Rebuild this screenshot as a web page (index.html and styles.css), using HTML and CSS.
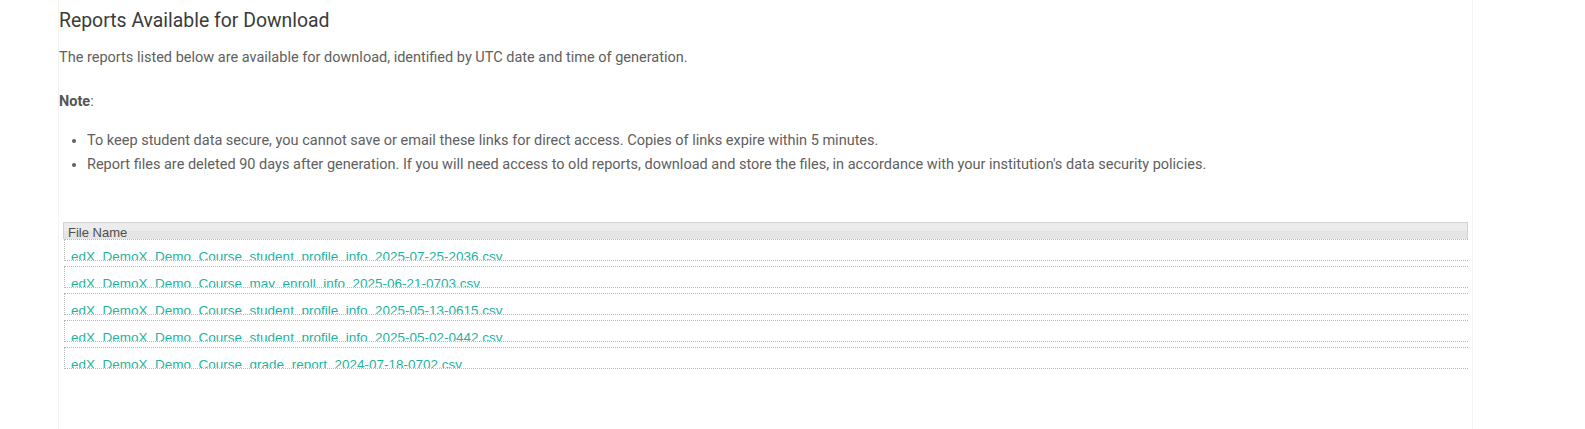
FILE: index.html
```html
<!DOCTYPE html>
<html>
<head>
<meta charset="utf-8">
<link rel="stylesheet" href="styles.css">
</head>
<body>
<div class="page">
  <h2 class="title">Reports Available for Download</h2>
  <p class="intro">The reports listed below are available for download, identified by UTC date and time of generation.</p>
  <p class="note"><strong>Note</strong>:</p>
  <ul class="notes">
    <li>To keep student data secure, you cannot save or email these links for direct access. Copies of links expire within 5 minutes.</li>
    <li>Report files are deleted 90 days after generation. If you will need access to old reports, download and store the files, in accordance with your institution's data security policies.</li>
  </ul>
  <div class="grid">
    <div class="grid-header"><span class="col-name">File Name</span></div>
    <div class="grid-body">
      <div class="grid-row"><div class="cell"><a href="#">edX_DemoX_Demo_Course_student_profile_info_2025-07-25-2036.csv</a></div></div>
      <div class="grid-row"><div class="cell"><a href="#">edX_DemoX_Demo_Course_may_enroll_info_2025-06-21-0703.csv</a></div></div>
      <div class="grid-row"><div class="cell"><a href="#">edX_DemoX_Demo_Course_student_profile_info_2025-05-13-0615.csv</a></div></div>
      <div class="grid-row"><div class="cell"><a href="#">edX_DemoX_Demo_Course_student_profile_info_2025-05-02-0442.csv</a></div></div>
      <div class="grid-row"><div class="cell"><a href="#">edX_DemoX_Demo_Course_grade_report_2024-07-18-0702.csv</a></div></div>
    </div>
  </div>
</div>
</body>
</html>
```

FILE: styles.css
```css
html, body {
  margin: 0;
  padding: 0;
  background: #ffffff;
}

body {
  font-family: Roboto, "Liberation Sans", sans-serif;
  color: #606060;
}

.page {
  margin-left: 58px;
  width: 1415px;
  min-height: 429px;
  box-sizing: border-box;
  border-left: 1px solid #f3f3f3;
  border-right: 1px solid #f3f3f3;
  padding-top: 9px;
}

.title {
  margin: 0;
  font-size: 19.4px;
  font-weight: 400;
  line-height: 24px;
  color: #3b3b3b;
}

.intro {
  margin: 15px 0 0 0;
  font-size: 14.5px;
  line-height: 20px;
}

.note {
  margin: 24px 0 0 0;
  font-size: 14.5px;
  line-height: 20px;
}

.note strong {
  font-weight: 700;
  color: #555555;
}

.notes {
  margin: 17px 0 0 0;
  padding-left: 28px;
  font-size: 14.5px;
  line-height: 24px;
}

.grid {
  margin: 45px 0 0 4px;
  width: 1405px;
  font-family: "Liberation Sans", Arial, sans-serif;
}

.grid-header {
  height: 16px;
  border: 1px solid #d3d3d3;
  border-bottom: none;
  background: linear-gradient(#ececec 0, #ececec 50%, #e5e5e5 50%, #e5e5e5 100%);
}

.col-name {
  display: block;
  padding-left: 4px;
  font-size: 13px;
  line-height: 15px;
  padding-top: 2px;
  color: #4f4f4f;
}

.grid-row {
  height: 27px;
}

.cell {
  height: 20px;
  margin-left: 1px;
  border-top: 1px dotted #b8b8b8;
  border-bottom: 1px dotted #b8b8b8;
  border-left: 1px dotted #b8b8b8;
  overflow: hidden;
  padding-left: 6px;
}

.cell a {
  display: block;
  padding-top: 9px;
  font-size: 13.5px;
  line-height: 16px;
  color: #1fb3a0;
  text-decoration: none;
  white-space: nowrap;
}
```
